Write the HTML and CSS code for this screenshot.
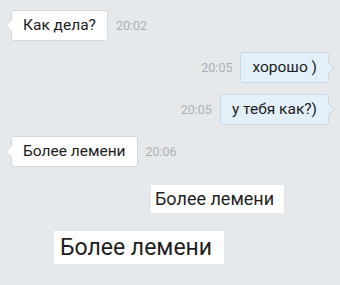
FILE: index.html
```html
<!DOCTYPE html>
<html lang="ru">
<head>
    <meta charset="UTF-8">
    <meta name="viewport" content="width=device-width, initial-scale=1.0">
    <title>Chat</title>
    <link rel="stylesheet" href="styles.css">
</head>
<body>
    <section class="chat">
        <div class="row in">
            <div class="bubble">Как дела?</div>
            <span class="time">20:02</span>
        </div>
        <div class="row out">
            <span class="time">20:05</span>
            <div class="bubble">хорошо )</div>
        </div>
        <div class="row out">
            <span class="time">20:05</span>
            <div class="bubble">у тебя как?)</div>
        </div>
        <div class="row in">
            <div class="bubble">Более лемени</div>
            <span class="time">20:06</span>
        </div>
    </section>
    <p class="label small">Более лемени</p>
    <p class="label big">Более лемени</p>
</body>
</html>
```
FILE: styles.css
```css
body{
    margin: 0;
    width: 340px;
    height: 285px;
    background-color: #e5e9ec;
    font-family: Roboto, 'Noto Sans', sans-serif;
    color: #1c1c1c;
    overflow: hidden;
}
.chat{
    display: flex;
    flex-direction: column;
    gap: 11px;
    padding: 10px 11px 0 11px;
}
.row{
    display: flex;
    align-items: center;
    gap: 8px;
}
.row.out{
    justify-content: flex-end;
}
.bubble{
    position: relative;
    height: 31px;
    line-height: 29px;
    padding: 0 11px;
    font-size: 15.5px;
    background-color: #fff;
    border: 1px solid #d3d8dc;
    border-radius: 3px;
    box-sizing: border-box;
}
.out .bubble{
    background-color: #e3f0fa;
    border-color: #c9d8e3;
}
.bubble::before{
    content: "";
    position: absolute;
    top: 10px;
    width: 8px;
    height: 8px;
    background-color: inherit;
    border: 1px solid #d3d8dc;
    transform: rotate(45deg);
}
.in .bubble::before{
    left: -5px;
    border-width: 0 0 1px 1px;
}
.out .bubble::before{
    right: -5px;
    border-color: #c9d8e3;
    border-width: 1px 1px 0 0;
}
.time{
    font-size: 12.5px;
    color: #aab1b6;
}
.label{
    background-color: #fff;
    margin: 0;
    width: max-content;
    color: #1e1e1e;
}
.label.small{
    font-size: 18px;
    padding: 3px 10px 4px 4px;
    margin: 18px 0 0 151px;
}
.label.big{
    font-size: 23px;
    padding: 3px 12px 3px 6px;
    margin: 18px 0 0 54px;
}
```
